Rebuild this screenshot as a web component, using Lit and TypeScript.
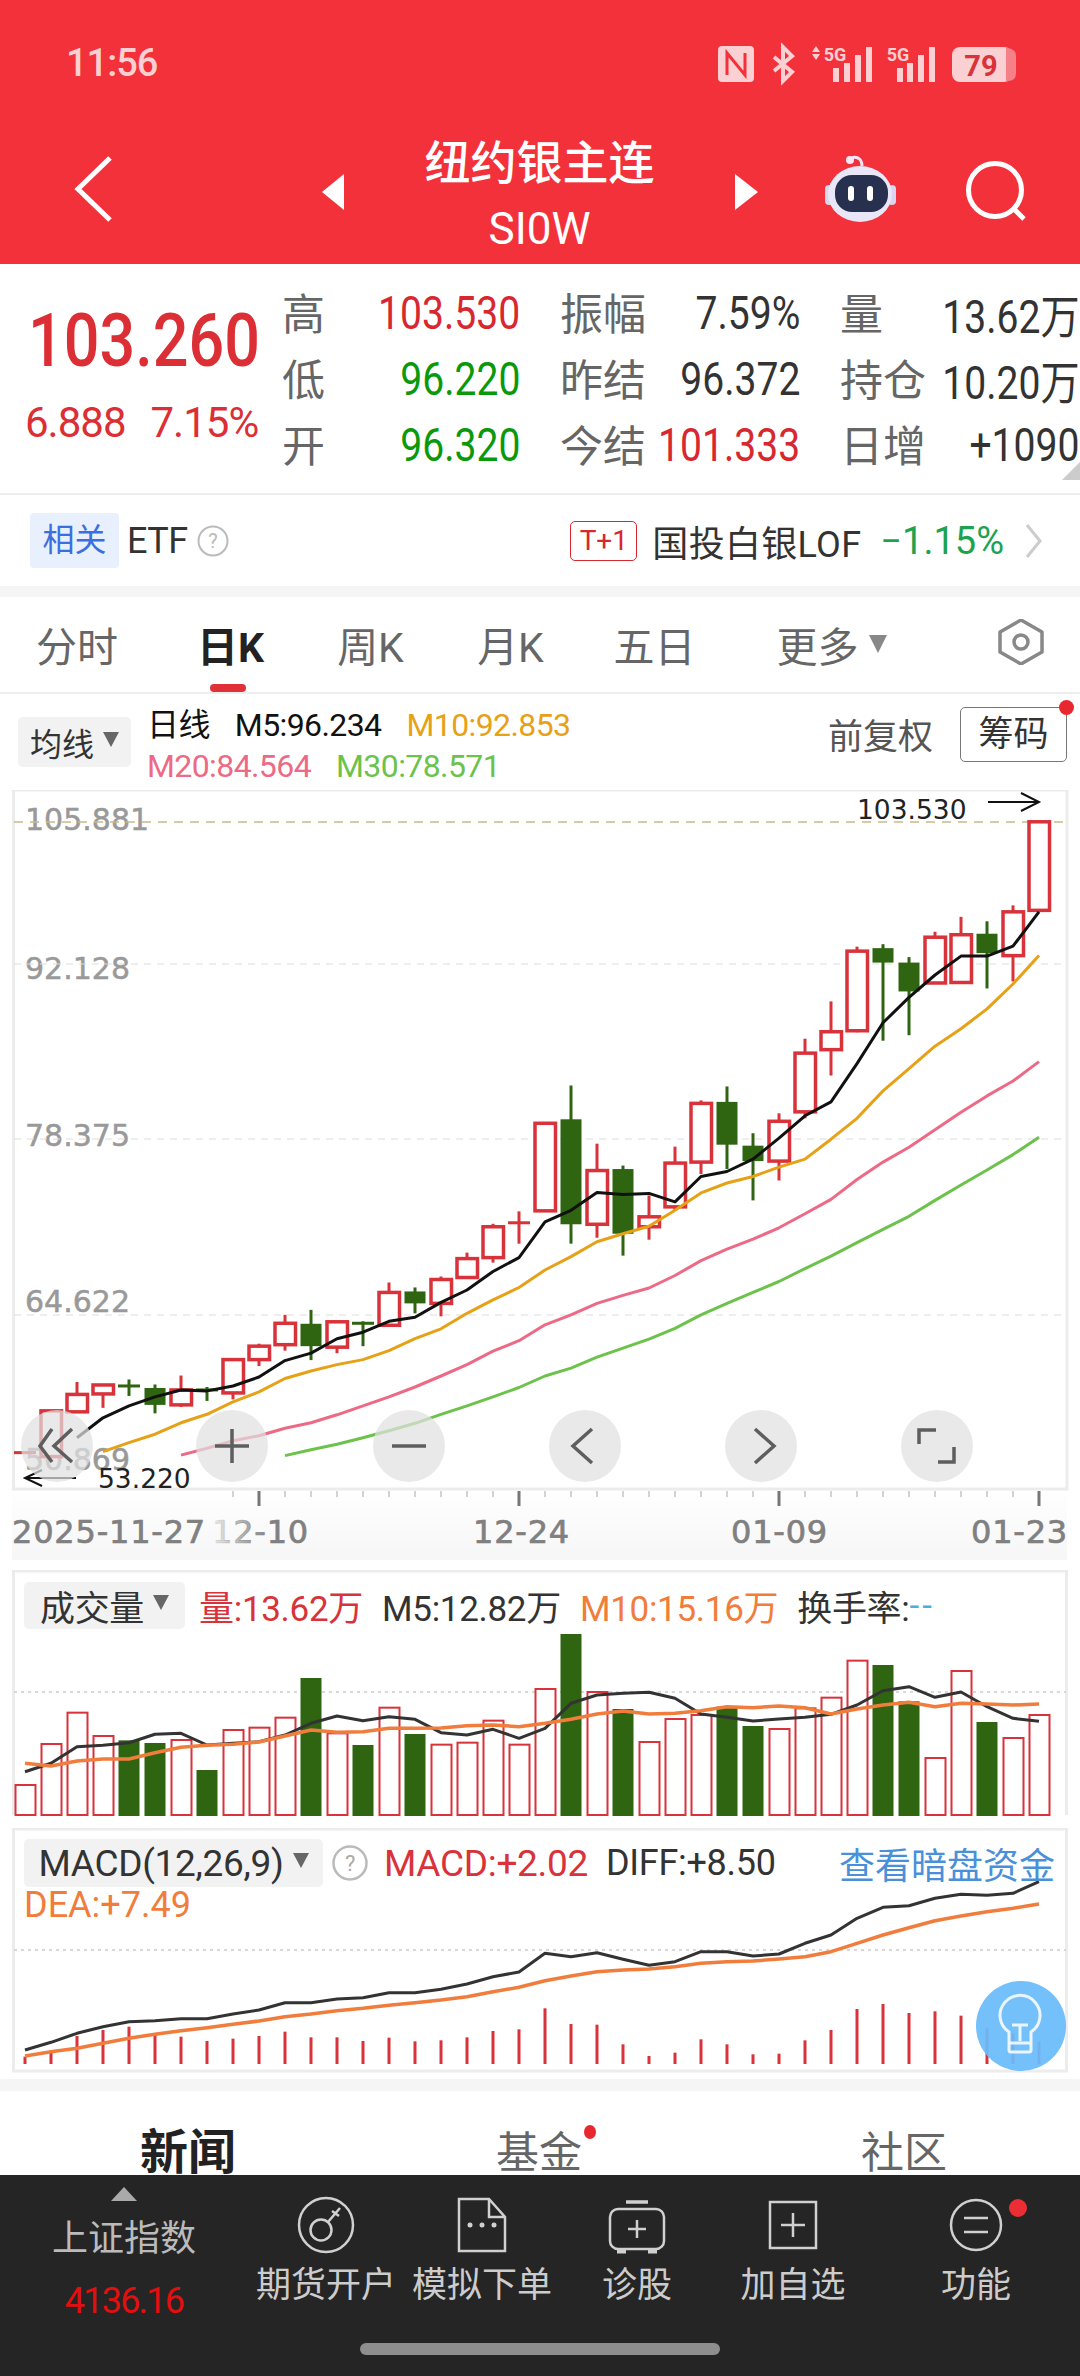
import { LitElement, css, html, svg } from "lit";
import { customElement } from "lit/decorators.js";

// candle: [up, bodyTop, bodyBottom, wickTop, wickBottom], y read off the zoomed chart
type Candle = [number, number, number, number, number];
const candles: Candle[] = [
  [1, 1352, 1352, 1352, 1352], [1, 1268, 1360, 1268, 1362], [1, 1235, 1270, 1210, 1272], [1, 1216, 1234, 1214, 1262],
  [0, 1218, 1218, 1205, 1238], [0, 1222, 1256, 1215, 1273], [1, 1226, 1256, 1197, 1260], [0, 1226, 1226, 1220, 1248],
  [1, 1165, 1232, 1162, 1245], [1, 1138, 1165, 1133, 1178], [1, 1092, 1135, 1075, 1147], [0, 1093, 1138, 1065, 1166],
  [1, 1089, 1140, 1087, 1152], [0, 1092, 1092, 1088, 1138], [1, 1030, 1096, 1010, 1098], [0, 1028, 1052, 1020, 1072],
  [1, 1004, 1052, 998, 1078], [1, 962, 1000, 950, 1002], [1, 898, 960, 892, 970], [1, 890, 890, 867, 932],
  [1, 690, 866, 690, 866], [0, 682, 893, 614, 932], [1, 785, 893, 731, 920], [0, 782, 912, 775, 956],
  [1, 878, 898, 835, 924], [1, 770, 858, 737, 865], [1, 650, 768, 644, 792], [0, 647, 733, 616, 782],
  [0, 735, 766, 710, 845], [1, 686, 766, 670, 805], [1, 549, 667, 520, 680], [1, 506, 542, 445, 594],
  [1, 344, 504, 335, 507], [0, 338, 367, 330, 524], [0, 367, 425, 356, 513], [1, 316, 408, 305, 410],
  [1, 311, 407, 275, 410], [0, 309, 348, 284, 419], [1, 265, 353, 252, 405], [1, 84, 262, 81, 262],
];

const ma5 = [1322, 1282, 1258, 1240, 1226, 1228, 1218, 1200, 1167, 1152, 1123, 1110, 1088, 1080, 1050, 1025, 988, 960, 888, 865, 829, 833, 831, 848, 797, 787, 762, 720, 675, 647, 570, 488, 437, 392, 354, 354, 334, 265];
const ma10 = [1350, 1332, 1315, 1292, 1275, 1250, 1230, 1203, 1188, 1175, 1165, 1147, 1123, 1103, 1072, 1045, 1020, 985, 958, 928, 912, 897, 865, 830, 810, 797, 778, 762, 722, 680, 625, 580, 535, 500, 460, 410, 353];
const ma20 = [1357, 1343, 1328, 1318, 1303, 1292, 1276, 1258, 1240, 1220, 1198, 1175, 1148, 1127, 1095, 1075, 1052, 1036, 1021, 996, 966, 943, 923, 900, 872, 843, 803, 768, 738, 703, 668, 635, 605, 566];
const ma30 = [1358, 1346, 1335, 1322, 1308, 1293, 1275, 1258, 1240, 1221, 1198, 1182, 1160, 1142, 1124, 1102, 1075, 1052, 1030, 1008, 982, 957, 930, 903, 877, 845, 814, 784, 753, 718];

const volumes: [number, number][] = [
  [1, 675], [1, 552], [1, 458], [1, 528], [0, 541], [0, 549], [1, 540], [0, 630], [1, 510], [1, 503],
  [1, 473], [0, 354], [1, 520], [0, 555], [1, 443], [0, 522], [1, 554], [1, 548], [1, 482], [1, 554],
  [1, 387], [0, 222], [1, 396], [0, 447], [1, 546], [1, 477], [1, 465], [0, 440], [0, 498], [1, 507],
  [1, 445], [1, 413], [1, 302], [0, 315], [0, 424], [1, 594], [1, 333], [0, 486], [1, 534], [1, 465],
];
const volMa5 = [635, 610, 560, 556, 548, 523, 520, 555, 550, 545, 525, 490, 468, 482, 470, 478, 518, 525, 508, 535, 505, 430, 405, 400, 397, 415, 462, 472, 483, 477, 472, 463, 435, 392, 380, 412, 396, 440, 475, 484];
const volMa10 = [610, 618, 603, 597, 597, 578, 562, 556, 553, 546, 528, 510, 517, 515, 505, 505, 504, 497, 495, 500, 490, 478, 462, 453, 462, 460, 452, 440, 443, 438, 443, 462, 447, 435, 427, 440, 430, 432, 435, 432];

const diff = [1470, 1447, 1420, 1400, 1385, 1382, 1376, 1376, 1362, 1350, 1328, 1328, 1317, 1313, 1298, 1298, 1288, 1272, 1250, 1236, 1180, 1190, 1178, 1198, 1216, 1205, 1175, 1175, 1188, 1182, 1150, 1125, 1075, 1042, 1037, 1015, 1003, 1006, 1000, 965];
const dea = [1488, 1475, 1465, 1450, 1435, 1423, 1412, 1403, 1393, 1383, 1370, 1362, 1352, 1345, 1336, 1328, 1320, 1310, 1295, 1282, 1262, 1248, 1235, 1230, 1227, 1220, 1210, 1205, 1203, 1197, 1190, 1175, 1150, 1125, 1103, 1082, 1068, 1055, 1045, 1032];
const macdBars = [1490, 1475, 1428, 1410, 1400, 1422, 1430, 1443, 1436, 1428, 1415, 1432, 1432, 1443, 1433, 1444, 1441, 1432, 1413, 1408, 1345, 1392, 1394, 1453, 1488, 1478, 1438, 1453, 1483, 1481, 1441, 1410, 1347, 1332, 1359, 1354, 1367, 1405, 1420, 1445];

const RED = "#d8323a";
const GREEN = "#2f6410";
const cx = (i: number) => 25 + 26 * i;
const py = (z: number) => 780 + z / 2.01;
const ly = (z: number) => 1560 + z / 3;

const line = (ys: number[], start: number, color: string, map: (z: number) => number, width = 3) =>
  svg`<polyline fill="none" stroke=${color} stroke-width=${width} stroke-linejoin="round" points=${ys.map((y, i) => `${cx(i + start)},${map(y).toFixed(1)}`).join(" ")}></polyline>`;

const circleBtn = (x: number) => svg`<circle cx=${x} cy="1446" r="36" fill="#e0e0e0" fill-opacity="0.72"></circle>`;

@customElement("app-root")
export class AppRoot extends LitElement {
  static styles = css`
    :host {
      display: block;
      width: 1080px;
      height: 2376px;
      overflow: hidden;
      background: #fff;
      font-family: Roboto, "Noto Sans CJK SC", sans-serif;
      color: #333;
    }
    svg { display: block; }
    text { font-family: "DejaVu Sans", sans-serif; }

    .top { background: #f3313b; height: 264px; }
    .status {
      display: flex;
      justify-content: space-between;
      box-sizing: border-box;
      height: 130px;
      padding: 30px 40px 0 66px;
    }
    .time { font-size: 38px; line-height: 66px; font-weight: 500; letter-spacing: -1px; color: #fbd0d3; }
    .nav { display: grid; grid-template-columns: 344px 391px 345px; height: 134px; }
    .title { text-align: center; color: #fff; }
    .title div:first-child { font-size: 46px; line-height: 66px; font-weight: 500; }
    .title div:last-child { font-size: 44px; line-height: 66px; }

    .quote { display: flex; box-sizing: border-box; height: 231px; border-bottom: 2px solid #eee; position: relative; }
    .last { width: 282px; box-sizing: border-box; padding: 36px 0 0 25px; color: #dc2f35; }
    .big { display: inline-block; margin-left: 3px; font-size: 74px; line-height: 82px; font-weight: 500; transform: scaleX(0.85); transform-origin: left; white-space: nowrap; }
    .chg { display: flex; gap: 25px; font-size: 42px; line-height: 82px; letter-spacing: -1px; white-space: nowrap; }
    .stats { display: grid; grid-template-columns: 238px 240px 240px; grid-auto-rows: 66px; column-gap: 40px; padding-top: 16px; }
    .cell { display: flex; justify-content: space-between; align-items: center; white-space: nowrap; font-size: 46px; }
    .cell span:first-child { font-size: 43px; color: #666; margin-bottom: 4px; }
    .cell span:last-child { display: inline-block; margin-left: -40px; transform: scaleX(0.85); transform-origin: right; }
    .r { color: #d8282f; }
    .g { color: #0a990a; }
    .corner {
      position: absolute;
      right: 0;
      bottom: 13px;
      border-style: solid;
      border-width: 0 0 18px 18px;
      border-color: transparent transparent #ccc transparent;
    }

    .etf { display: flex; align-items: center; justify-content: space-between; box-sizing: border-box; height: 91px; padding: 0 38px 0 30px; }
    .etf > div { display: flex; align-items: center; }
    .tag { width: 89px; height: 55px; line-height: 55px; text-align: center; font-size: 32px; background: #e8f0fe; color: #3b6fde; border-radius: 4px; }
    .etf-name { font-size: 36px; margin-left: 8px; letter-spacing: -0.5px; }
    .help { margin-left: 9px; }
    .t1 { width: 67px; height: 40px; line-height: 38px; box-sizing: border-box; text-align: center; border: 1px solid #d8282f; border-radius: 5px; color: #d8282f; font-size: 28px; }
    .fund { margin-left: 15px; font-size: 36px; letter-spacing: 0.3px; color: #333; white-space: nowrap; }
    .pct { margin: 0 21px 0 19px; font-size: 38px; color: #1da34f; white-space: nowrap; }
    .band { height: 11px; background: #f5f5f5; }
    .bandb { height: 12px; background: #f5f5f5; }

    .tabs {
      display: grid;
      grid-template-columns: 154px 153px 127px 153px 135px 219px 1fr;
      box-sizing: border-box;
      height: 97px;
      border-bottom: 2px solid #eee;
      font-size: 41px;
      color: #666;
    }
    .tab { position: relative; display: flex; justify-content: center; align-items: center; padding-bottom: 2px; gap: 10px; }
    .tab.on { color: #222; font-weight: 700; }
    .tab.on::after { content: ""; position: absolute; left: 56px; bottom: 0; width: 36px; height: 8px; border-radius: 4px; background: #e03038; }
    .tri { width: 0; height: 0; border-style: solid; border-width: 18px 9px 0 9px; border-color: #888 transparent transparent transparent; }
    .tab-set { display: flex; align-items: center; justify-content: flex-end; padding: 0 35px 6px 0; }

    .legend { display: flex; box-sizing: border-box; height: 96px; padding: 0 13px 0 18px; }
    .select { display: flex; align-items: center; justify-content: center; gap: 9px; background: #f2f2f2; border-radius: 5px; color: #333; white-space: nowrap; }
    .select .tri { border-width: 15px 8px 0 8px; border-color: #666 transparent transparent transparent; margin-top: -6px; }
    .ma-select { width: 113px; height: 50px; margin-top: 23px; font-size: 32px; }
    .ma { margin-left: 16px; padding-top: 11px; font-size: 32px; line-height: 41px; letter-spacing: -0.6px; white-space: nowrap; }
    .ma div { display: flex; gap: 25px; }
    .m-k { color: #111; }
    .m-o { color: #e6a117; }
    .m-p { color: #ec6a85; }
    .m-g { color: #6cc24a; }
    .adj { margin-left: auto; margin-top: 26px; font-size: 35px; line-height: 36px; height: 36px; color: #555; }
    .chip {
      position: relative;
      box-sizing: border-box;
      width: 107px;
      height: 55px;
      line-height: 53px;
      margin: 13px 0 0 27px;
      text-align: center;
      border: 1px solid #777;
      border-radius: 5px;
      font-size: 35px;
    }
    .chip::after { content: ""; position: absolute; right: -8px; top: -8px; width: 15px; height: 15px; border-radius: 50%; background: #e8282f; }

    .panel { position: relative; }
    .overlay {
      position: absolute;
      left: 24px;
      right: 25px;
      top: 11px;
      font-size: 35px;
      letter-spacing: -0.3px;
      white-space: nowrap;
    }
    .overlay .row { display: flex; align-items: center; height: 48px; }
    .vol-select { width: 161px; height: 47px; font-size: 35px; margin-right: 14px; }
    .macd-select { width: 299px; height: 48px; font-size: 37px; margin-right: 9px; }
    .vr { color: #d8323a; }
    .vk { color: #333; margin-left: 19px; }
    .vo { color: #f07d3c; margin-left: 19px; }
    .vb { color: #4aaee0; letter-spacing: 3px; }
    .link { margin-left: auto; font-size: 36px; letter-spacing: 0; color: #4a90d9; }
    .dea { color: #f07d3c; font-size: 36px; line-height: 36px; letter-spacing: 0; }
    .macd-v { font-size: 37px; }
    .macd-gap { margin-left: 16px; }
    .diff { font-size: 36px; margin-left: 18px; }

    .news { display: grid; grid-template-columns: 376px 326px 404px; height: 84px; overflow: hidden; text-align: center; color: #666; font-size: 43px; line-height: 56px; }
    .news div { padding-top: 34px; }
    .news b { color: #222; font-size: 48px; font-weight: 700; }
    .dot-wrap { position: relative; display: inline-block; }
    .dot-wrap::after { content: ""; position: absolute; right: -14px; top: 0; width: 12px; height: 14px; border-radius: 50%; background: #e8282f; }

    .foot {
      position: relative;
      display: grid;
      grid-template-columns: 248px 156px 156px 154px 158px 208px;
      height: 201px;
      background: #252525;
      color: #ccc;
      font-size: 35px;
      text-align: center;
    }
    .item svg { margin: 12px auto 0; }
    .item { white-space: nowrap; line-height: 61px; padding-top: 8px; }
    .index { padding-top: 12px; }
    .up { width: 0; height: 0; margin: 0 auto; border-style: solid; border-width: 0 13px 14px 13px; border-color: transparent transparent #aaa transparent; }
    .index-name { margin-top: 14px; font-size: 36px; line-height: 48px; color: #bbb; }
    .index-val { margin-top: 16px; font-size: 36px; line-height: 44px; letter-spacing: -1.8px; color: #e01010; }
    .home { position: absolute; left: 360px; bottom: 21px; width: 360px; height: 12px; border-radius: 6px; background: #8e8e8e; }
    .foot-dot { position: absolute; left: 1009px; top: 24px; width: 18px; height: 18px; border-radius: 50%; background: #ea2e34; }
  `;

  private statusIcons() {
    const pink = "#fbd0d3";
    const tops = [38, 33, 25, 17];
    const bars = (xs: number[]) =>
      xs.map((x, i) => svg`<rect x=${x} y=${tops[i]} width="6" height=${52 - tops[i]} fill=${pink}></rect>`);
    return html`<svg width="340" height="70" viewBox="0 0 340 70">
      <rect x="18" y="16" width="36" height="36" rx="4" fill=${pink}></rect>
      <path d="M27 45V23l18 22V23" fill="none" stroke="#f3313b" stroke-width="3"></path>
      <path d="M74 27l18 15-9 9V17l9 9-18 15" fill="none" stroke=${pink} stroke-width="4"></path>
      <path d="M116 16l4 6h-8zM116 30l4-6h-8z" fill=${pink}></path>
      <text x="135" y="31" text-anchor="middle" font-size="18" font-weight="700" fill=${pink} style="font-family:Roboto,sans-serif">5G</text>
      ${bars([133, 144, 155, 166])}
      <text x="198" y="31" text-anchor="middle" font-size="18" font-weight="700" fill=${pink} style="font-family:Roboto,sans-serif">5G</text>
      ${bars([197, 207, 218, 229])}
      <rect x="252" y="17" width="60" height="35" rx="8" fill=${pink}></rect>
      <path d="M306 18h2q8 1 8 8v17q0 8-8 8h-2z" fill="#f58087"></path>
      <text x="281" y="46" text-anchor="middle" font-size="29" font-weight="700" fill="#d8323a" style="font-family:Roboto,sans-serif">79</text>
    </svg>`;
  }

  private priceChart() {
    const labels: [string, number][] = [["105.881", 830], ["92.128", 979], ["78.375", 1146], ["64.622", 1312], ["50.869", 1470]];
    return html`<svg width="1080" height="780" viewBox="0 790 1080 780">
      <defs>
        <linearGradient id="strip" x1="0" y1="0" x2="0" y2="1">
          <stop offset="0" stop-color="#fff"></stop>
          <stop offset="1" stop-color="#f6f6f6"></stop>
        </linearGradient>
        <linearGradient id="fade" gradientUnits="userSpaceOnUse" x1="212" y1="0" x2="270" y2="0">
          <stop offset="0" stop-color="#808080" stop-opacity="0.12"></stop>
          <stop offset="1" stop-color="#808080"></stop>
        </linearGradient>
      </defs>
      <rect x="12" y="1489" width="1055" height="71" fill="url(#strip)"></rect>
      <path d="M13.5 1489V790H1067V1489H12" fill="none" stroke="#ececec" stroke-width="3"></path>
      ${labels.map(([t, y]) => svg`<text x="25" y=${y} font-size="30" fill="#999" stroke="#999" stroke-width="0.5">${t}</text>`)}
      <line x1="14" x2="1066" y1="822" y2="822" stroke="#c9b98a" stroke-width="1.5" stroke-dasharray="9 7"></line>
      ${[964, 1139, 1315].map((y) => svg`<line x1="14" x2="1066" y1=${y} y2=${y} stroke="#ddd" stroke-width="1" stroke-dasharray="7 6"></line>`)}
      ${candles.map(([up, a, b, c, d], i) => {
        const x = cx(i);
        const color = up ? RED : GREEN;
        const wick = svg`<line x1=${x} x2=${x} y1=${py(c)} y2=${py(d)} stroke=${color} stroke-width="3"></line>`;
        if (a === b) return svg`${wick}<line x1=${x - 11} x2=${x + 11} y1=${py(a)} y2=${py(a)} stroke=${color} stroke-width="3"></line>`;
        return up
          ? svg`${wick}<rect x=${x - 10} y=${py(a)} width="20.5" height=${py(b) - py(a)} fill="#fff" stroke=${color} stroke-width="3.5"></rect>`
          : svg`${wick}<rect x=${x - 10.5} y=${py(a)} width="21" height=${py(b) - py(a)} fill=${color}></rect>`;
      })}
      ${line(ma30, 10, "#6cc24a", py)}
      ${line(ma20, 6, "#ec6a85", py)}
      ${line(ma10, 3, "#e6a117", py)}
      ${line(ma5, 2, "#111", py)}
      <text x="857" y="819" font-size="26.5" fill="#222">103.530</text>
      <path d="M988 802H1038M1021 793L1039 802L1021 811" fill="none" stroke="#111" stroke-width="2"></path>
      <text x="98" y="1488" font-size="26.5" fill="#222">53.220</text>
      <path d="M76 1478H26M42 1470L25 1478L42 1486" fill="none" stroke="#111" stroke-width="2"></path>
      ${[57, 232, 409, 585, 761, 937].map(circleBtn)}
      <g fill="none" stroke="#5e5e5e" stroke-width="3.5">
        <path d="M52 1429L40 1446L52 1462M72 1429L54 1446L72 1462"></path>
        <path d="M215 1446H249M232 1429V1463"></path>
        <path d="M392 1446H426"></path>
        <path d="M592 1429L573 1446L592 1463"></path>
        <path d="M755 1429L774 1446L755 1463"></path>
        <path d="M919 1444V1430H936M938 1462H954V1447"></path>
      </g>
      ${candles.slice(8).map((_, i) => svg`<line x1=${cx(i + 8)} x2=${cx(i + 8)} y1="1491" y2="1497" stroke="#c4c4c4" stroke-width="1.5"></line>`)}
      ${[9, 19, 29, 39].map((i) => svg`<line x1=${cx(i)} x2=${cx(i)} y1="1491" y2="1506" stroke="#777" stroke-width="3"></line>`)}
      <g font-size="32" fill="#808080" stroke="#808080" stroke-width="0.7" letter-spacing="0.8">
        <text x="12" y="1543">2025-11-27</text>
        <text x="212" y="1543" fill="url(#fade)" stroke="url(#fade)">12-10</text>
        <text x="473" y="1543">12-24</text>
        <text x="731" y="1543">01-09</text>
        <text x="971" y="1543">01-23</text>
      </g>
    </svg>`;
  }

  private volumeChart() {
    return html`<svg width="1080" height="258" viewBox="0 1570 1080 258">
      <path d="M13.5 1815V1571H1066.5V1815" fill="none" stroke="#ececec" stroke-width="3"></path>
      <line x1="14" x2="1066" y1="1692" y2="1692" stroke="#ccc" stroke-width="1.5" stroke-dasharray="3 4"></line>
      ${volumes.map(([up, top], i) => {
        const y = ly(top);
        return up
          ? svg`<rect x=${cx(i) - 9.5} y=${y} width="20" height=${1815 - y} fill="#fff" stroke=${RED} stroke-width="2"></rect>`
          : svg`<rect x=${cx(i) - 10.5} y=${y} width="21" height=${1816 - y} fill=${GREEN}></rect>`;
      })}
      ${line(volMa5, 0, "#333", ly, 3)}
      ${line(volMa10, 0, "#f07d3c", ly, 3.5)}
    </svg>`;
  }

  private macdChart() {
    return html`<svg width="1080" height="251" viewBox="0 1828 1080 251">
      <path d="M13.5 1829V2071H1066.5V1829H12" fill="none" stroke="#ececec" stroke-width="3"></path>
      <line x1="14" x2="1066" y1="1950" y2="1950" stroke="#ccc" stroke-width="1.5" stroke-dasharray="3 4"></line>
      ${macdBars.map((top, i) => svg`<rect x=${cx(i) - 1.5} y=${ly(top)} width="3" height=${2064 - ly(top)} fill=${RED}></rect>`)}
      ${line(diff, 0, "#333", ly, 3)}
      ${line(dea, 0, "#f07d3c", ly, 3.5)}
      <circle cx="1021" cy="2026" r="45" fill="#69bbfb" fill-opacity="0.93"></circle>
      <path d="M1009 2032A20 20 0 1 1 1031 2032V2050Q1031 2052 1029 2052H1011Q1009 2052 1009 2050ZM1012 2025H1028M1020 2025V2041M1010 2043H1030"
        fill="none" stroke="#eaf5ff" stroke-width="3"></path>
    </svg>`;
  }

  render() {
    const stroke = "#d0d0d0";
    return html`
      <div class="top">
        <div class="status">
          <div class="time">11:56</div>
          ${this.statusIcons()}
        </div>
        <div class="nav">
          <svg width="344" height="134" viewBox="0 130 344 134">
            <path d="M110 158L78 189L110 220" fill="none" stroke="#fff" stroke-width="5"></path>
            <path d="M344 174L322 192L344 210Z" fill="#fff"></path>
          </svg>
          <div class="title"><div>纽约银主连</div><div>SI0W</div></div>
          <svg width="345" height="134" viewBox="735 130 345 134">
            <path d="M735 174L758 192L735 210Z" fill="#fff"></path>
            <path d="M849 163q2-8 9-5q4 2 4 8" fill="none" stroke="#f0e6f5" stroke-width="3"></path>
            <circle cx="850" cy="160" r="4" fill="#f4e8f5"></circle>
            <rect x="825" y="185" width="8" height="20" rx="4" fill="#d7d6ee"></rect>
            <rect x="888" y="185" width="8" height="20" rx="4" fill="#d7d6ee"></rect>
            <ellipse cx="860" cy="194" rx="32" ry="28" fill="#e9e7f7"></ellipse>
            <rect x="835" y="175" width="53" height="37" rx="17" fill="#27304f"></rect>
            <rect x="848" y="186" width="6" height="15" rx="3" fill="#fff"></rect>
            <rect x="867" y="186" width="6" height="15" rx="3" fill="#fff"></rect>
            <circle cx="995" cy="190" r="26.5" fill="none" stroke="#fff" stroke-width="5"></circle>
            <path d="M1013 208L1024 219" stroke="#fff" stroke-width="5"></path>
          </svg>
        </div>
      </div>

      <div class="quote">
        <div class="last">
          <div class="big">103.260</div>
          <div class="chg"><span>6.888</span><span>7.15%</span></div>
        </div>
        <div class="stats">
          <div class="cell"><span>高</span><span class="r">103.530</span></div>
          <div class="cell"><span>振幅</span><span>7.59%</span></div>
          <div class="cell"><span>量</span><span>13.62万</span></div>
          <div class="cell"><span>低</span><span class="g">96.220</span></div>
          <div class="cell"><span>昨结</span><span>96.372</span></div>
          <div class="cell"><span>持仓</span><span>10.20万</span></div>
          <div class="cell"><span>开</span><span class="g">96.320</span></div>
          <div class="cell"><span>今结</span><span class="r">101.333</span></div>
          <div class="cell"><span>日增</span><span>+1090</span></div>
        </div>
        <div class="corner"></div>
      </div>

      <div class="etf">
        <div>
          <div class="tag">相关</div>
          <div class="etf-name">ETF</div>
          <svg class="help" width="32" height="32" viewBox="0 0 32 32">
            <circle cx="16" cy="16" r="14.5" fill="none" stroke="#bbb" stroke-width="2"></circle>
            <text x="16" y="23" text-anchor="middle" font-size="20" fill="#bbb" style="font-family:Roboto,sans-serif">?</text>
          </svg>
        </div>
        <div>
          <div class="t1">T+1</div>
          <div class="fund">国投白银LOF</div>
          <div class="pct">−1.15%</div>
          <svg width="17" height="34" viewBox="0 0 17 34"><path d="M2 1L15 17L2 33" fill="none" stroke="#ccc" stroke-width="3"></path></svg>
        </div>
      </div>
      <div class="band"></div>

      <div class="tabs">
        <div class="tab">分时</div>
        <div class="tab on">日K</div>
        <div class="tab">周K</div>
        <div class="tab">月K</div>
        <div class="tab">五日</div>
        <div class="tab">更多<span class="tri"></span></div>
        <div class="tab-set">
          <svg width="48" height="46" viewBox="0 0 48 46">
            <path d="M14 2H34L46 23L34 44H14L2 23Z" transform="rotate(90 24 23)" fill="none" stroke="#888" stroke-width="3.5" stroke-linejoin="round"></path>
            <circle cx="24" cy="23" r="7" fill="none" stroke="#888" stroke-width="3.5"></circle>
          </svg>
        </div>
      </div>

      <div class="legend">
        <div class="select ma-select">均线<span class="tri"></span></div>
        <div class="ma">
          <div><span class="m-k">日线</span><span class="m-k">M5:96.234</span><span class="m-o">M10:92.853</span></div>
          <div><span class="m-p">M20:84.564</span><span class="m-g">M30:78.571</span></div>
        </div>
        <div class="adj">前复权</div>
        <div class="chip">筹码</div>
      </div>

      ${this.priceChart()}

      <div class="panel">
        ${this.volumeChart()}
        <div class="overlay">
          <div class="row">
            <div class="select vol-select">成交量<span class="tri"></span></div>
            <span class="vr">量:13.62万</span>
            <span class="vk">M5:12.82万</span>
            <span class="vo">M10:15.16万</span>
            <span class="vk">换手率:</span><span class="vb">--</span>
          </div>
        </div>
      </div>

      <div class="panel">
        ${this.macdChart()}
        <div class="overlay">
          <div class="row">
            <div class="select macd-select">MACD(12,26,9)<span class="tri"></span></div>
            <svg width="36" height="36" viewBox="0 0 36 36">
              <circle cx="18" cy="18" r="16.5" fill="none" stroke="#bbb" stroke-width="2.5"></circle>
              <text x="18" y="26" text-anchor="middle" font-size="22" fill="#aaa" style="font-family:Roboto,sans-serif">?</text>
            </svg>
            <span class="vr macd-v macd-gap">MACD:+2.02</span>
            <span class="vk diff">DIFF:+8.50</span>
            <span class="link">查看暗盘资金</span>
          </div>
          <div class="dea">DEA:+7.49</div>
        </div>
      </div>
      <div class="bandb"></div>

      <div class="news">
        <div><b>新闻</b></div>
        <div><span class="dot-wrap">基金</span></div>
        <div>社区</div>
      </div>

      <div class="foot">
        <div class="index">
          <div class="up"></div>
          <div class="index-name">上证指数</div>
          <div class="index-val">4136.16</div>
        </div>
        <div class="item">
          <svg width="60" height="60" viewBox="0 0 60 60" fill="none" stroke=${stroke} stroke-width="2.5">
            <circle cx="30" cy="30" r="27"></circle>
            <circle cx="25" cy="35" r="10.5"></circle>
            <path d="M32 27L44 13M36 16L43 21"></path>
          </svg>
          <div>期货开户</div>
        </div>
        <div class="item">
          <svg width="50" height="60" viewBox="0 0 50 60" fill="none" stroke=${stroke} stroke-width="2.5">
            <path d="M2 4H32L48 22V56H2ZM32 4V22H48"></path>
            <circle cx="13" cy="30" r="2.5" fill=${stroke} stroke="none"></circle>
            <circle cx="25" cy="30" r="2.5" fill=${stroke} stroke="none"></circle>
            <circle cx="37" cy="30" r="2.5" fill=${stroke} stroke="none"></circle>
          </svg>
          <div>模拟下单</div>
        </div>
        <div class="item">
          <svg width="58" height="60" viewBox="0 0 58 60" fill="none" stroke=${stroke} stroke-width="2.5">
            <path d="M18 7H40" stroke-width="3.5"></path>
            <rect x="2" y="14" width="54" height="40" rx="8"></rect>
            <path d="M29 25V43M20 34H38"></path>
            <path d="M9 56H18M40 56H49" stroke-width="5"></path>
          </svg>
          <div>诊股</div>
        </div>
        <div class="item">
          <svg width="50" height="60" viewBox="0 0 50 60" fill="none" stroke=${stroke} stroke-width="2.5">
            <rect x="2" y="7" width="46" height="46"></rect>
            <path d="M25 18V42M13 30H37"></path>
          </svg>
          <div>加自选</div>
        </div>
        <div class="item">
          <svg width="54" height="60" viewBox="0 0 54 60" fill="none" stroke=${stroke} stroke-width="2.5">
            <circle cx="27" cy="30" r="25"></circle>
            <path d="M15 23H39M15 37H39"></path>
          </svg>
          <div>功能</div>
        </div>
        <div class="home"></div>
        <div class="foot-dot"></div>
      </div>
    `;
  }
}
